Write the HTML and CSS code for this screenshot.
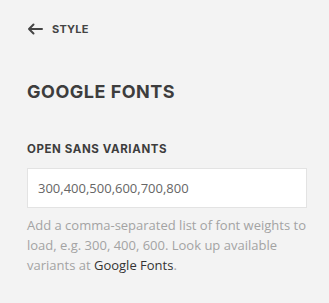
FILE: index.html
```html
<!DOCTYPE html>
<html lang="en">
<head>
  <meta charset="UTF-8">
  <meta name="viewport" content="width=device-width, initial-scale=1.0">
  <title>Google Fonts</title>
  <link rel="stylesheet" href="styles.css">
</head>
<body>
  <div class="panel">
    <!-- Back link -->
    <a class="back" href="#">
      <svg class="back-icon" width="16" height="12" viewBox="0 0 16 12" aria-hidden="true">
        <path d="M15 6H2M6.5 1.5L2 6l4.5 4.5" fill="none" stroke="#444" stroke-width="2" stroke-linecap="round" stroke-linejoin="round"/>
      </svg>
      <span>STYLE</span>
    </a>

    <h2 class="title">GOOGLE FONTS</h2>

    <!-- Variants field -->
    <label class="field-label" for="variants">OPEN SANS VARIANTS</label>
    <input class="field-input" type="text" id="variants" value="300,400,500,600,700,800">
    <p class="help">Add a comma-separated list of font weights to load, e.g. 300, 400, 600. Look up available variants at <a href="#">Google Fonts</a>.</p>
  </div>
</body>
</html>
```

FILE: styles.css
```css
* {
  margin: 0;
  padding: 0;
  box-sizing: border-box;
}

body {
  background-color: #f3f3f3;
  font-family: 'Open Sans', sans-serif;
  width: 329px;
  height: 303px;
  overflow: hidden;
}

.panel {
  padding: 21px 22px 0 27px;
}

.back {
  display: flex;
  align-items: center;
  gap: 9px;
  color: #444;
  text-decoration: none;
  font-family: 'Inter', sans-serif;
  font-weight: 700;
  font-size: 11px;
  letter-spacing: 0.2px;
  height: 16px;
}

.back-icon {
  display: block;
}

.title {
  font-family: 'Inter', sans-serif;
  font-weight: 700;
  font-size: 18px;
  letter-spacing: 0.5px;
  color: #3d3d3d;
  margin-top: 44px;
  line-height: 22px;
}

.field-label {
  display: block;
  font-family: 'Inter', sans-serif;
  font-weight: 700;
  font-size: 11.5px;
  letter-spacing: 0.6px;
  color: #3d3d3d;
  margin-top: 39px;
  line-height: 14px;
}

.field-input {
  display: block;
  width: 280px;
  height: 40px;
  margin-top: 12px;
  padding: 0 10px;
  border: 1px solid #e3e3e3;
  background: #fff;
  font-family: 'Open Sans', sans-serif;
  font-size: 13px;
  color: #666;
  outline: none;
}

.help {
  margin-top: 7px;
  font-size: 13px;
  line-height: 20px;
  color: #a3a3a3;
}

.help a {
  color: #333;
  text-decoration: none;
}
```
